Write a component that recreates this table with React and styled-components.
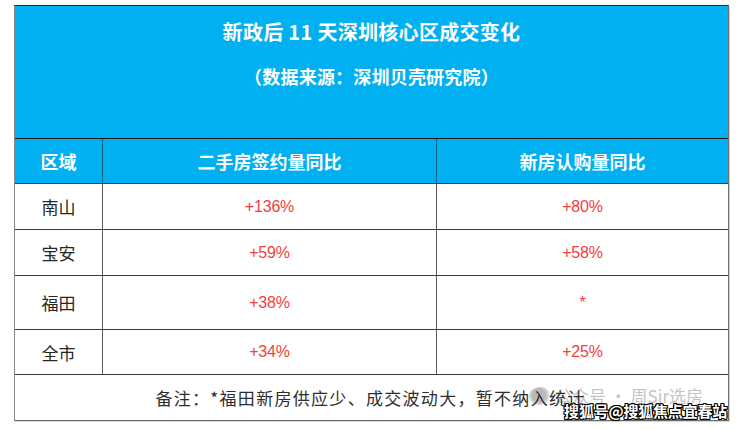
import React from "react";
import styled, { createGlobalStyle } from "styled-components";

const Global = createGlobalStyle`
  html, body { margin: 0; padding: 0; background: #ffffff; }
  body { font-family: "Noto Sans CJK SC", "Noto Sans", sans-serif; }
`;

const Page = styled.div`
  width: 740px;
  height: 429px;
  padding: 5px 0 0 14px;
  box-sizing: border-box;
  position: relative;
  overflow: hidden;
`;

const Table = styled.div`
  width: 715px;
  box-sizing: border-box;
  border-left: 1px solid #8a8a8a;
  border-right: 1px solid #6f6f6f;
  border-top: 1px solid #1d3340;
  border-bottom: 1px solid #6a6a6a;
  box-shadow: 1px 1px 0 #d6d6d6;
`;

const Banner = styled.div`
  height: 132px;
  background: #00b0f0;
  color: #ffffff;
  display: flex;
  flex-direction: column;
  align-items: center;
  font-weight: 700;
`;

const Title = styled.div`
  margin-top: 12px;
  height: 28px;
  line-height: 28px;
  font-size: 20px;
  letter-spacing: 0.3px;
`;

const Subtitle = styled.div`
  margin-top: 16px;
  height: 28px;
  line-height: 28px;
  font-size: 18px;
  letter-spacing: 0.2px;
`;

const Row = styled.div`
  display: grid;
  grid-template-columns: 87px 334px 292px;
  height: ${(p) => p.$h}px;
  border-top: 1px solid ${(p) => (p.$head ? "#1a1a1a" : "#3c3c3c")};
  background: ${(p) => (p.$head ? "#00b0f0" : "#ffffff")};
`;

const Cell = styled.div`
  display: flex;
  align-items: center;
  justify-content: center;
  border-left: ${(p) => (p.$first ? "none" : `1px solid ${p.$head ? "#0c5f7f" : "#5a5a5a"}`)};
`;

const HeadText = styled.span`
  color: #ffffff;
  font-size: 18px;
  font-weight: 700;
`;

const Region = styled.span`
  color: #262626;
  font-size: 17px;
`;

const Value = styled.span`
  color: #f53d3d;
  font-family: "Liberation Sans", Arial, sans-serif;
  font-size: 16px;
  letter-spacing: -0.2px;
`;

const NoteRow = styled.div`
  height: 45px;
  border-top: 1px solid #3c3c3c;
  display: flex;
  align-items: center;
  justify-content: center;
  position: relative;
`;

const NoteText = styled.span`
  position: relative;
  z-index: 1;
  color: #2e2e2e;
  font-size: 17px;
  letter-spacing: 1.3px;
  margin-left: -2px;
`;

const Watermark = styled.div`
  position: absolute;
  left: 514px;
  top: 8px;
  display: flex;
  align-items: center;
  gap: 4px;
  z-index: 0;
  color: #c4c4c4;
  font-size: 17px;
  white-space: nowrap;
`;

const WmLogo = styled.span`
  width: 22px;
  height: 18px;
  border-radius: 50%;
  background: radial-gradient(circle at 45% 45%, #b8b8b8 0 40%, #d6d6d6 60%, rgba(220,220,220,0) 72%);
`;

const Stamp = styled.div`
  position: absolute;
  right: 13px;
  bottom: 8px;
  color: #ffffff;
  font-size: 15px;
  font-weight: 700;
  letter-spacing: -0.2px;
  white-space: nowrap;
  text-shadow:
    1px 0 0 #000, -1px 0 0 #000, 0 1px 0 #000, 0 -1px 0 #000,
    1px 1px 0 #000, -1px -1px 0 #000, 1px -1px 0 #000, -1px 1px 0 #000;
`;

const rows = [
  { region: "南山", a: "+136%", b: "+80%", h: 45 },
  { region: "宝安", a: "+59%", b: "+58%", h: 45 },
  { region: "福田", a: "+38%", b: "*", h: 53 },
  { region: "全市", a: "+34%", b: "+25%", h: 44 },
];

export default function App() {
  return (
    <>
      <Global />
      <Page>
        <Table>
          <Banner>
            <Title>新政后 11 天深圳核心区成交变化</Title>
            <Subtitle>（数据来源：深圳贝壳研究院）</Subtitle>
          </Banner>
          <Row $head $h={44}>
            <Cell $first $head><HeadText>区域</HeadText></Cell>
            <Cell $head><HeadText>二手房签约量同比</HeadText></Cell>
            <Cell $head><HeadText>新房认购量同比</HeadText></Cell>
          </Row>
          {rows.map((r) => (
            <Row key={r.region} $h={r.h}>
              <Cell $first><Region>{r.region}</Region></Cell>
              <Cell><Value>{r.a}</Value></Cell>
              <Cell><Value>{r.b}</Value></Cell>
            </Row>
          ))}
          <NoteRow>
            <Watermark>
              <WmLogo />
              <span>公众号 · 周Sir选房</span>
            </Watermark>
            <NoteText>备注：*福田新房供应少、成交波动大，暂不纳入统计</NoteText>
          </NoteRow>
        </Table>
        <Stamp>搜狐号@搜狐焦点宜春站</Stamp>
      </Page>
    </>
  );
}
